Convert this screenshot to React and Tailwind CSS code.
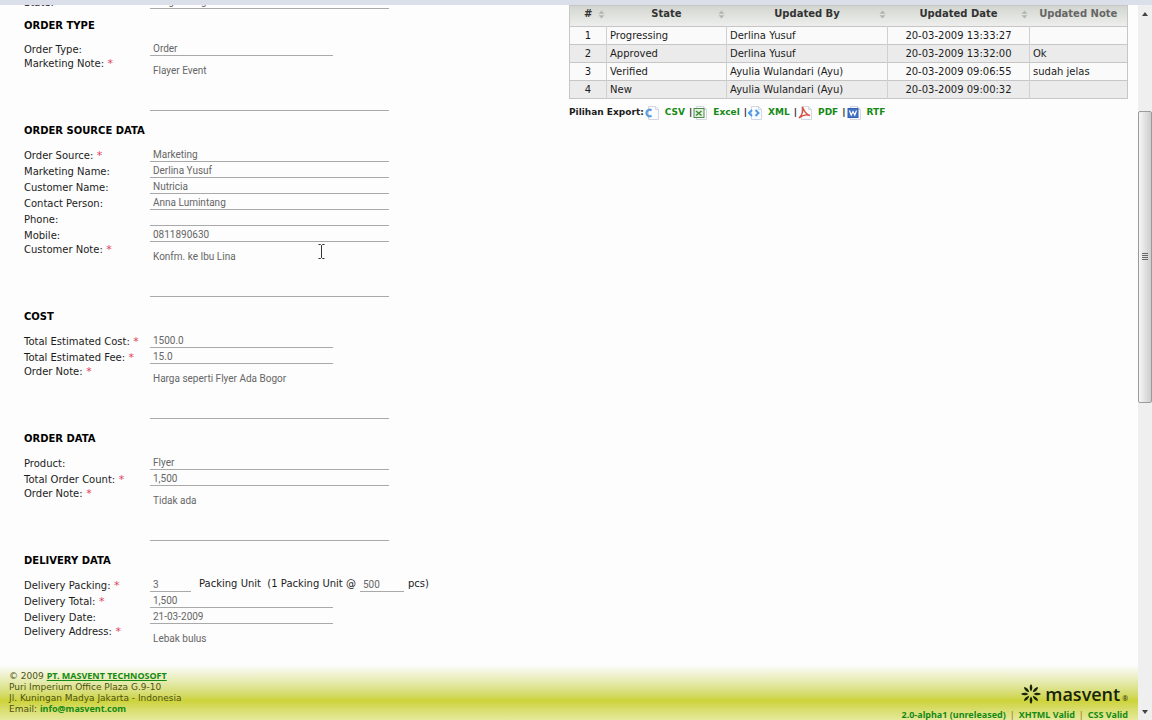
import { useState } from 'react'
import clsx from 'clsx'

const SECTIONS = [
  {
    title: 'ORDER TYPE',
    fields: [
      { id: 'order-type', label: 'Order Type:', value: 'Order', size: 'md' },
      { id: 'marketing-note', label: 'Marketing Note:', value: 'Flayer Event', required: true, area: true },
    ],
  },
  {
    title: 'ORDER SOURCE DATA',
    fields: [
      { id: 'order-source', label: 'Order Source:', value: 'Marketing', required: true },
      { id: 'marketing-name', label: 'Marketing Name:', value: 'Derlina Yusuf' },
      { id: 'customer-name', label: 'Customer Name:', value: 'Nutricia' },
      { id: 'contact-person', label: 'Contact Person:', value: 'Anna Lumintang' },
      { id: 'phone', label: 'Phone:', value: '' },
      { id: 'mobile', label: 'Mobile:', value: '0811890630' },
      { id: 'customer-note', label: 'Customer Note:', value: 'Konfm. ke Ibu Lina', required: true, area: true },
    ],
  },
  {
    title: 'COST',
    fields: [
      { id: 'estimated-cost', label: 'Total Estimated Cost:', value: '1500.0', required: true, size: 'md' },
      { id: 'estimated-fee', label: 'Total Estimated Fee:', value: '15.0', required: true, size: 'md' },
      { id: 'cost-note', label: 'Order Note:', value: 'Harga seperti Flyer Ada Bogor', required: true, area: true },
    ],
  },
  {
    title: 'ORDER DATA',
    fields: [
      { id: 'product', label: 'Product:', value: 'Flyer' },
      { id: 'order-count', label: 'Total Order Count:', value: '1,500', required: true },
      { id: 'order-note', label: 'Order Note:', value: 'Tidak ada', required: true, area: true },
    ],
  },
  {
    title: 'DELIVERY DATA',
    fields: [
      { id: 'delivery-packing', label: 'Delivery Packing:', value: '3', required: true, packing: '500' },
      { id: 'delivery-total', label: 'Delivery Total:', value: '1,500', required: true, size: 'md' },
      { id: 'delivery-date', label: 'Delivery Date:', value: '21-03-2009', size: 'md' },
      { id: 'delivery-address', label: 'Delivery Address:', value: 'Lebak bulus', required: true, area: true },
    ],
  },
]

const COLUMNS = [
  { key: 'no', label: '#', width: 'w-[37px]' },
  { key: 'state', label: 'State', width: 'w-[120px]' },
  { key: 'by', label: 'Updated By', width: '' },
  { key: 'date', label: 'Updated Date', width: 'w-[142px]' },
]

const HISTORY = [
  { no: 1, state: 'Progressing', by: 'Derlina Yusuf', date: '20-03-2009 13:33:27', note: '' },
  { no: 2, state: 'Approved', by: 'Derlina Yusuf', date: '20-03-2009 13:32:00', note: 'Ok' },
  { no: 3, state: 'Verified', by: 'Ayulia Wulandari (Ayu)', date: '20-03-2009 09:06:55', note: 'sudah jelas' },
  { no: 4, state: 'New', by: 'Ayulia Wulandari (Ayu)', date: '20-03-2009 09:00:32', note: '' },
]

const EXPORTS = ['CSV', 'Excel', 'XML', 'PDF', 'RTF']

const inputClass =
  'block h-4 border-b border-[#a9a9a9] bg-transparent pt-px pl-[3px] font-[Roboto] text-[10px] text-[#666] outline-none'

function Label({ field }) {
  return (
    <label htmlFor={field.id} className={clsx('w-[126px] shrink-0 whitespace-nowrap', field.area ? 'leading-4' : 'leading-[13px]')}>
      {field.label}
      {field.required && <span className="text-[11px] text-[#e0405a]"> *</span>}
    </label>
  )
}

function Field({ field }) {
  if (field.area) {
    return (
      <div className="flex items-start">
        <Label field={field} />
        <textarea
          id={field.id}
          defaultValue={field.value}
          className="block h-[55px] w-[239px] resize-none overflow-hidden border-b border-[#a9a9a9] pt-2 pl-[3px] font-[Roboto] text-[10px] leading-[14px] text-[#666] outline-none"
        />
      </div>
    )
  }

  if (field.packing) {
    return (
      <div className="flex h-4 items-end">
        <Label field={field} />
        <input id={field.id} defaultValue={field.value} className={clsx(inputClass, 'w-[41px]')} />
        <label htmlFor="packing-size" className="ml-2 whitespace-pre leading-4">{'Packing Unit  (1 Packing Unit @'}</label>
        <input id="packing-size" defaultValue={field.packing} className={clsx(inputClass, 'ml-1 w-[44px]')} />
        <span className="ml-1 leading-4">pcs)</span>
      </div>
    )
  }

  return (
    <div className="flex h-4 items-end">
      <Label field={field} />
      <input
        id={field.id}
        defaultValue={field.value}
        className={clsx(inputClass, field.size === 'md' ? 'w-[183px]' : 'w-[239px]')}
      />
    </div>
  )
}

function SortIcon() {
  return (
    <svg viewBox="0 0 7 9" className="absolute top-1 right-[2px] h-[9px] w-[7px]" fill="#b3b5b1">
      <path d="M3.500 0.500L6.500 3.700H0.500ZM3.500 8.500L0.500 5.300H6.500Z" />
    </svg>
  )
}

// small document page with a format mark on its left side
function FileIcon({ type }) {
  return (
    <svg viewBox="0 0 15 14" className="h-[14px] w-[15px]" fill="none">
      <path d="M3.500 0.500H10.500L13.500 3.500V13.500H3.500Z" fill="#fbfcff" stroke="#d3d7e2" />
      <path d="M10.500 0.500V3.500H13.500" stroke="#d3d7e2" />
      {type === 'CSV' && <path d="M6.500 4.500A3 3.200 0 1 0 6.500 9.500" stroke="#5b9be0" strokeWidth="2.200" />}
      {type === 'Excel' && (
        <>
          <rect x="1" y="2.500" width="10" height="9" fill="#e3f2de" stroke="#4f8a4a" />
          <path d="M3 5L8.500 9.500M8.500 5L3 9.500" stroke="#3f8a3c" strokeWidth="1.500" />
        </>
      )}
      {type === 'XML' && <path d="M4 4L1 7L4 10M7.500 4L10.500 7L7.500 10" stroke="#4a9ae8" strokeWidth="2" />}
      {type === 'PDF' && (
        <path d="M4.500 1C6 5 8 8.500 12 9.500C8 8.200 4.500 9 1 12C4 9 5.500 5 4.500 1Z" stroke="#dc4a3c" strokeWidth="1.300" />
      )}
      {type === 'RTF' && (
        <>
          <rect x="1" y="2.500" width="10" height="9" fill="#4472c4" stroke="#3560b0" />
          <path d="M2.500 4.500L4.200 9L6 5.500L7.800 9L9.500 4.500" stroke="#fff" strokeWidth="1.200" />
        </>
      )}
    </svg>
  )
}

function HistoryTable() {
  const [sort, setSort] = useState(null)
  const rows = sort
    ? [...HISTORY].sort((a, b) => String(a[sort]).localeCompare(String(b[sort])))
    : HISTORY

  return (
    <table className="w-full table-fixed border-collapse border border-[#c6c6c6]">
      <thead>
        <tr className="h-[21px] border-b border-[#c6c6c6] bg-linear-to-b from-[#d3d6d0] to-[#eeefed]">
          {COLUMNS.map(col => (
            <th key={col.key} className={clsx('p-0 align-top', col.width)}>
              <button type="button" onClick={() => setSort(col.key)} className="relative block w-full text-center leading-4 font-bold text-[#333]">
                {col.label}
                <SortIcon />
              </button>
            </th>
          ))}
          <th className="w-[98px] p-0 align-top leading-4 font-bold whitespace-nowrap text-[#666]">Updated Note</th>
        </tr>
      </thead>
      <tbody>
        {rows.map(row => (
          <tr key={row.no} className="h-[18px] border-b border-[#c6c6c6] bg-[#fafafa] leading-4 whitespace-nowrap even:bg-[#ebebeb]">
            <td className="border-r border-[#d0d0d0] p-0 pt-px text-center">{row.no}</td>
            <td className="border-r border-[#d0d0d0] p-0 pt-px pl-[3px]">{row.state}</td>
            <td className="border-r border-[#d0d0d0] p-0 pt-px pl-[3px]">{row.by}</td>
            <td className="border-r border-[#d0d0d0] p-0 pt-px text-center">{row.date}</td>
            <td className="p-0 pt-px pl-[3px]">{row.note}</td>
          </tr>
        ))}
      </tbody>
    </table>
  )
}

function ExportLinks() {
  return (
    <div className="mt-1.5 flex h-4 items-center text-[9px] font-bold">
      <span>Pilihan Export:</span>
      {EXPORTS.map((type, i) => (
        <span key={type} className="flex items-center">
          {i > 0 && <span className="ml-1">|</span>}
          <a href="#" className="ml-px flex items-center gap-[5px] text-[#148a14]">
            <FileIcon type={type} />
            {type}
          </a>
        </span>
      ))}
    </div>
  )
}

function Logo() {
  return (
    <div className="flex items-center gap-1 text-[#17240a]">
      <svg viewBox="0 0 20 20" className="size-5" fill="currentColor">
        {[0, 45, 90, 135, 180, 225, 270, 315].map(angle => (
          <path key={angle} d="M10 7.500C8.200 5 8.500 2.500 9.500 0.500H10.500C11.500 2.500 11.800 5 10 7.500Z" transform={`rotate(${angle} 10 10)`} />
        ))}
      </svg>
      <span className="flex items-end font-['Open_Sans'] text-[18px] leading-5 font-semibold">
        masvent<span className="ml-[2px] text-[7px] leading-[10px] font-normal">®</span>
      </span>
    </div>
  )
}

function Footer() {
  return (
    <footer className="flex h-[55px] shrink-0 justify-between overflow-hidden bg-linear-to-b from-[#fdfdfd] via-[#cdd337] via-65% to-[#e6e99a] pr-[10px] pl-[9px] text-[9px] leading-[11px] text-[#4d5212]">
      <address className="pt-[6px] not-italic">
        © 2009 <a href="#" className="font-['Noto_Sans'] leading-[8px] font-bold text-[#148a14] underline">PT. MASVENT TECHNOSOFT</a>
        <br />
        Puri Imperium Office Plaza G.9-10
        <br />
        Jl. Kuningan Madya Jakarta - Indonesia
        <br />
        Email: <a href="#" className="font-['Noto_Sans'] leading-[8px] font-bold text-[#148a14]">info@masvent.com</a>
      </address>
      <div className="flex flex-col items-end pt-[19px]">
        <Logo />
        <div className="mt-[5px] flex gap-1 font-['Noto_Sans'] font-bold whitespace-nowrap text-[#148a14]">
          <a href="#">2.0-alpha1 (unreleased)</a>
          <span className="font-normal text-[#a06a10]">|</span>
          <a href="#">XHTML Valid</a>
          <span className="font-normal text-[#a06a10]">|</span>
          <a href="#">CSS Valid</a>
        </div>
      </div>
    </footer>
  )
}

function Scrollbar() {
  return (
    <div className="flex w-[14px] shrink-0 flex-col items-center bg-[#efefef]">
      <svg viewBox="0 0 14 17" className="h-[17px] w-[14px]" fill="#444">
        <path d="M7 7L10 11H4Z" />
      </svg>
      <div className="flex w-full flex-1 flex-col">
        <div className="h-[13%]" />
        <div className="flex h-[43%] w-full flex-col items-center justify-center gap-px rounded-xs border border-[#9a9a9a] bg-linear-to-r from-[#f6f6f6] to-[#cdcdcd]">
          <span className="h-px w-1.5 bg-[#666]" />
          <span className="h-px w-1.5 bg-[#666]" />
          <span className="h-px w-1.5 bg-[#666]" />
          <span className="h-px w-1.5 bg-[#666]" />
        </div>
      </div>
      <svg viewBox="0 0 14 17" className="h-[17px] w-[14px]" fill="#444">
        <path d="M7 11L10 7H4Z" />
      </svg>
    </div>
  )
}

export default function App() {
  return (
    <div className="relative flex h-screen flex-col overflow-hidden bg-[#fdfdfd] font-['DejaVu_Sans',sans-serif] text-[10px] text-[#1c1c1c]">
      <div className="h-[5px] shrink-0 bg-[#dadfe9]" />
      <div className="flex min-h-0 flex-1">
        <div className="flex min-w-0 flex-1 flex-col">
          <main className="grid min-h-0 flex-1 grid-cols-2 overflow-hidden">
            <form className="-mt-3 pl-6">
              <Field field={{ id: 'state', label: 'State:', value: 'Progressing' }} />
              {SECTIONS.map((section, i) => (
                <section key={section.title}>
                  <h2 className={clsx('leading-[18px] font-bold text-black', i === 0 ? 'pt-2 pb-[5px]' : 'pt-[11px] pb-[6px]')}>
                    {section.title}
                  </h2>
                  {section.fields.map(field => <Field key={field.id} field={field} />)}
                </section>
              ))}
            </form>
            <div className="pr-[10px]">
              <HistoryTable />
              <ExportLinks />
            </div>
          </main>
          <Footer />
        </div>
        <Scrollbar />
      </div>

      {/* Text cursor */}
      <svg viewBox="0 0 7 15" className="pointer-events-none absolute top-[244px] left-[318px] h-[15px] w-[7px]" fill="none" stroke="#333">
        <path d="M0.500 0.500H2.500L3.500 1.500L4.500 0.500H6.500M3.500 1.500V13.500M0.500 14.500H2.500L3.500 13.500L4.500 14.500H6.500" />
      </svg>
    </div>
  )
}
